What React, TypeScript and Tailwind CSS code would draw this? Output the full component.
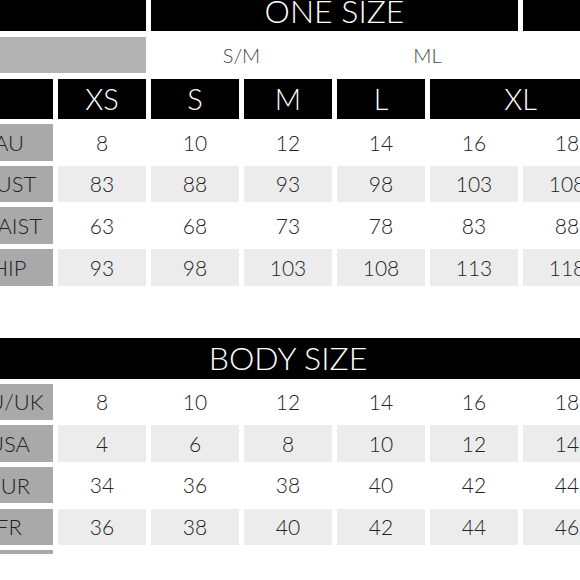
import React from "react";

const sizes = ["XS", "S", "M", "L"];

const oneSize = [
  { label: "AU", values: [8, 10, 12, 14, 16, 18] },
  { label: "BUST", values: [83, 88, 93, 98, 103, 108] },
  { label: "WAIST", values: [63, 68, 73, 78, 83, 88] },
  { label: "HIP", values: [93, 98, 103, 108, 113, 118] },
];

const bodySize = [
  { label: "AU/UK", values: [8, 10, 12, 14, 16, 18] },
  { label: "USA", values: [4, 6, 8, 10, 12, 14] },
  { label: "EUR", values: [34, 36, 38, 40, 42, 44] },
  { label: "FR", values: [36, 38, 40, 42, 44, 46] },
];

const DataRows = ({ rows }: { rows: { label: string; values: number[] }[] }) => (
  <>
    {rows.map((row, i) => (
      <React.Fragment key={row.label}>
        <div className="h-[36.5px] bg-[#a9a9a9] flex items-center justify-center text-[22px] text-[#222]">
          {row.label}
        </div>
        {row.values.map((v, j) => (
          <div
            key={j}
            className={`h-[36.5px] flex items-center justify-center text-[21px] text-[#222] ${
              i % 2 === 1 ? "bg-[#ececec]" : "bg-white"
            }`}
          >
            {v}
          </div>
        ))}
      </React.Fragment>
    ))}
  </>
);

const App = () => {
  return (
    <div className="w-[580px] h-[580px] overflow-hidden bg-white font-light font-['Lato','Liberation_Sans',sans-serif]">
      <div className="ml-[-35px] mt-[-9px] w-[646px]">
        {/* one size */}
        <div className="grid grid-cols-[repeat(7,88px)] gap-x-[5px]">
          <div className="col-span-2 h-[40px] bg-black" />
          <div className="col-span-4 h-[40px] bg-black text-white text-[32px] flex items-center justify-center">
            ONE SIZE
          </div>
          <div className="h-[40px] bg-black" />

          <div className="col-span-2 h-[36px] mt-[6px] bg-[#b3b3b3]" />
          <div className="col-span-2 h-[36px] mt-[6px] flex items-center justify-center text-[20px] text-[#444]">
            S/M
          </div>
          <div className="col-span-2 h-[36px] mt-[6px] flex items-center justify-center text-[20px] text-[#444]">
            ML
          </div>
          <div className="h-[36px] mt-[6px]" />

          <div className="h-[40px] mt-[6px] mb-[5px] bg-black" />
          {sizes.map((s) => (
            <div
              key={s}
              className="h-[40px] mt-[6px] mb-[5px] bg-black text-white text-[29px] flex items-center justify-center"
            >
              {s}
            </div>
          ))}
          <div className="col-span-2 h-[40px] mt-[6px] mb-[5px] bg-black text-white text-[29px] flex items-center justify-center">
            XL
          </div>
        </div>
        <div className="grid grid-cols-[repeat(7,88px)] gap-x-[5px] gap-y-[5.2px]">
          <DataRows rows={oneSize} />
        </div>

        {/* body size */}
        <div className="mt-[52px] h-[41px] bg-black text-white text-[32px] flex items-center justify-center">
          BODY SIZE
        </div>
        <div className="mt-[5px] grid grid-cols-[repeat(7,88px)] gap-x-[5px] gap-y-[5.2px]">
          <DataRows rows={bodySize} />
          <div className="h-[4px] bg-[#a9a9a9]" />
        </div>
      </div>
    </div>
  );
};

export default App;
